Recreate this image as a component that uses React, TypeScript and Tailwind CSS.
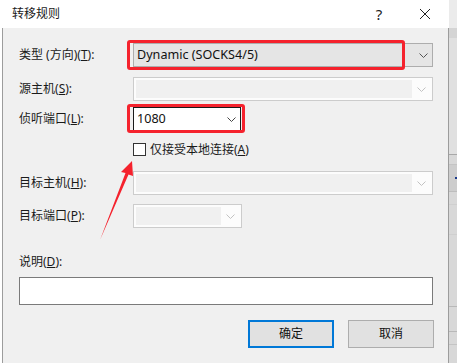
import React from "react";

const Chevron = ({ color }: { color: string }) => (
  <svg width="9" height="5" viewBox="0 0 9 5" fill="none">
    <path d="M0.5 0.5 L4.5 4.5 L8.5 0.5" stroke={color} strokeWidth="1" />
  </svg>
);

const DisabledCombo = ({ width }: { width: string }) => (
  <div className={`${width} h-[24px] flex border border-[#cccccc] bg-[#fcfcfc] p-[2px]`}>
    <div className="flex-1 bg-[#f0f0f0]" />
    <div className="w-[18px] flex items-center justify-center">
      <Chevron color="#c2c2c2" />
    </div>
  </div>
);

const Label = ({ text, k }: { text: string; k: string }) => (
  <div className="w-[114px] text-[12px] text-[#1a1a1a]">
    {text}(<u>{k}</u>):
  </div>
);

const App = () => {
  return (
    <div
      className="relative w-[457px] h-[363px] overflow-hidden flex bg-white"
      style={{ fontFamily: '"Noto Sans", "Noto Sans CJK SC", sans-serif' }}
    >
      <div className="w-[449px] flex flex-col">
        <div className="h-[28px] flex items-center bg-white">
          <div className="pl-[12px] text-[12px] text-[#1a1a1a] flex-1">转移规则</div>
          <div className="w-[24px] text-[15px] text-[#222] text-center mr-[22px]">?</div>
          <div className="w-[24px] flex justify-center mr-[12px]">
            <svg width="12" height="12" viewBox="0 0 12 12">
              <path d="M1 1 L11 11 M11 1 L1 11" stroke="#222" strokeWidth="1" />
            </svg>
          </div>
        </div>
        <div className="flex-1 ml-[2px] bg-[#f0f0f0] border-l border-r border-[#9c9c9c] pl-[16px] pr-[14px] flex flex-col">
          {/* 类型 */}
          <div className="mt-[15px] h-[24px] flex items-center">
            <div className="w-[114px] text-[12px] text-[#1a1a1a]">
              类型 (方向)(<u>T</u>):
            </div>
            <div className="relative w-[300px] h-[24px] flex items-center bg-[#e5e5e5] border border-[#adadad]">
              <div className="flex-1 pl-[3px] text-[12.6px] text-[#111]">Dynamic (SOCKS4/5)</div>
              <div className="w-[18px] flex justify-center">
                <Chevron color="#555" />
              </div>
              <div className="absolute left-[-7px] top-[-4px] w-[278px] h-[30px] border-[3px] border-[#f5222d] rounded-[3px]" />
            </div>
          </div>
          {/* 源主机 */}
          <div className="mt-[10px] h-[24px] flex items-center">
            <Label text="源主机" k="S" />
            <DisabledCombo width="w-[300px]" />
          </div>
          {/* 侦听端口 */}
          <div className="mt-[6px] h-[24px] flex items-center">
            <Label text="侦听端口" k="L" />
            <div className="relative w-[108px] h-[24px] flex items-center bg-white border border-[#1a1a1a]">
              <div className="flex-1 pl-[3px] text-[12.6px] text-[#111]">1080</div>
              <div className="w-[18px] flex justify-center">
                <Chevron color="#444" />
              </div>
              <div className="absolute left-[-7px] top-[-4px] w-[118px] h-[29px] border-[3px] border-[#f5222d] rounded-[3px]" />
            </div>
          </div>
          {/* checkbox */}
          <div className="mt-[12px] h-[13px] flex items-center pl-[114px]">
            <div className="w-[13px] h-[13px] border border-[#333] bg-white" />
            <div className="ml-[4px] text-[12px] text-[#1a1a1a]">
              仅接受本地连接(<u>A</u>)
            </div>
          </div>
          {/* 目标主机 */}
          <div className="mt-[15px] h-[24px] flex items-center">
            <Label text="目标主机" k="H" />
            <DisabledCombo width="w-[300px]" />
          </div>
          {/* 目标端口 */}
          <div className="mt-[9px] h-[24px] flex items-center">
            <Label text="目标端口" k="P" />
            <DisabledCombo width="w-[109px]" />
          </div>
          {/* 说明 */}
          <div className="mt-[26px] h-[16px] flex items-center text-[12px] text-[#1a1a1a]">
            说明(<u>D</u>):
          </div>
          <div className="mt-[7px] w-[414px] h-[28px] bg-white border border-[#7a7a7a]" />
          <div className="mt-[15px] flex justify-end gap-[14px]">
            <button className="w-[86px] h-[28px] bg-[#e1e1e1] border-2 border-[#0078d7] text-[12px] text-[#111]">
              确定
            </button>
            <button className="w-[86px] h-[28px] bg-[#e1e1e1] border border-[#adadad] text-[12px] text-[#111]">
              取消
            </button>
          </div>
        </div>
      </div>
      {/* window behind */}
      <div className="flex-1 flex flex-col bg-[#dcdcdc]">
        <div className="h-[28px] bg-[#ebebeb]" />
        <div className="h-[10px] bg-[#d4d4d4]" />
        <div className="h-[117px] bg-[#e0e0e0] border-b border-[#a8a8a8]" />
        <div className="h-[10px] bg-[#d8d8d8] border-b border-[#c4c4c4]" />
        <div className="h-[27px] bg-[#cdcdcd] border-b border-[#bdbdbd] flex items-center">
          <div className="ml-[6px] w-[2px] h-[2px] bg-[#1a3a8a]" />
        </div>
        <div className="h-[13px] bg-[#d8d8d8] border-b border-[#cfcfcf]" />
        <div className="h-[30px] bg-[#d8d8d8] border-b border-[#cfcfcf]" />
        <div className="h-[72px] bg-[#d8d8d8] border-b border-[#b8b8b8]" />
        <div className="h-[25px] bg-[#d8d8d8] border-b border-[#b8b8b8]" />
        <div className="h-[13px] bg-[#d8d8d8] border-b border-[#c4c4c4]" />
        <div className="flex-1 bg-[#d8d8d8]" />
      </div>
      {/* annotation arrow */}
      <svg className="absolute left-0 top-0 pointer-events-none" width="457" height="363">
        <polygon
          points="100,240 125.5,173 121,172 132,161 133,176 128.5,174.5"
          fill="#f5222d"
        />
      </svg>
    </div>
  );
};

export default App;
